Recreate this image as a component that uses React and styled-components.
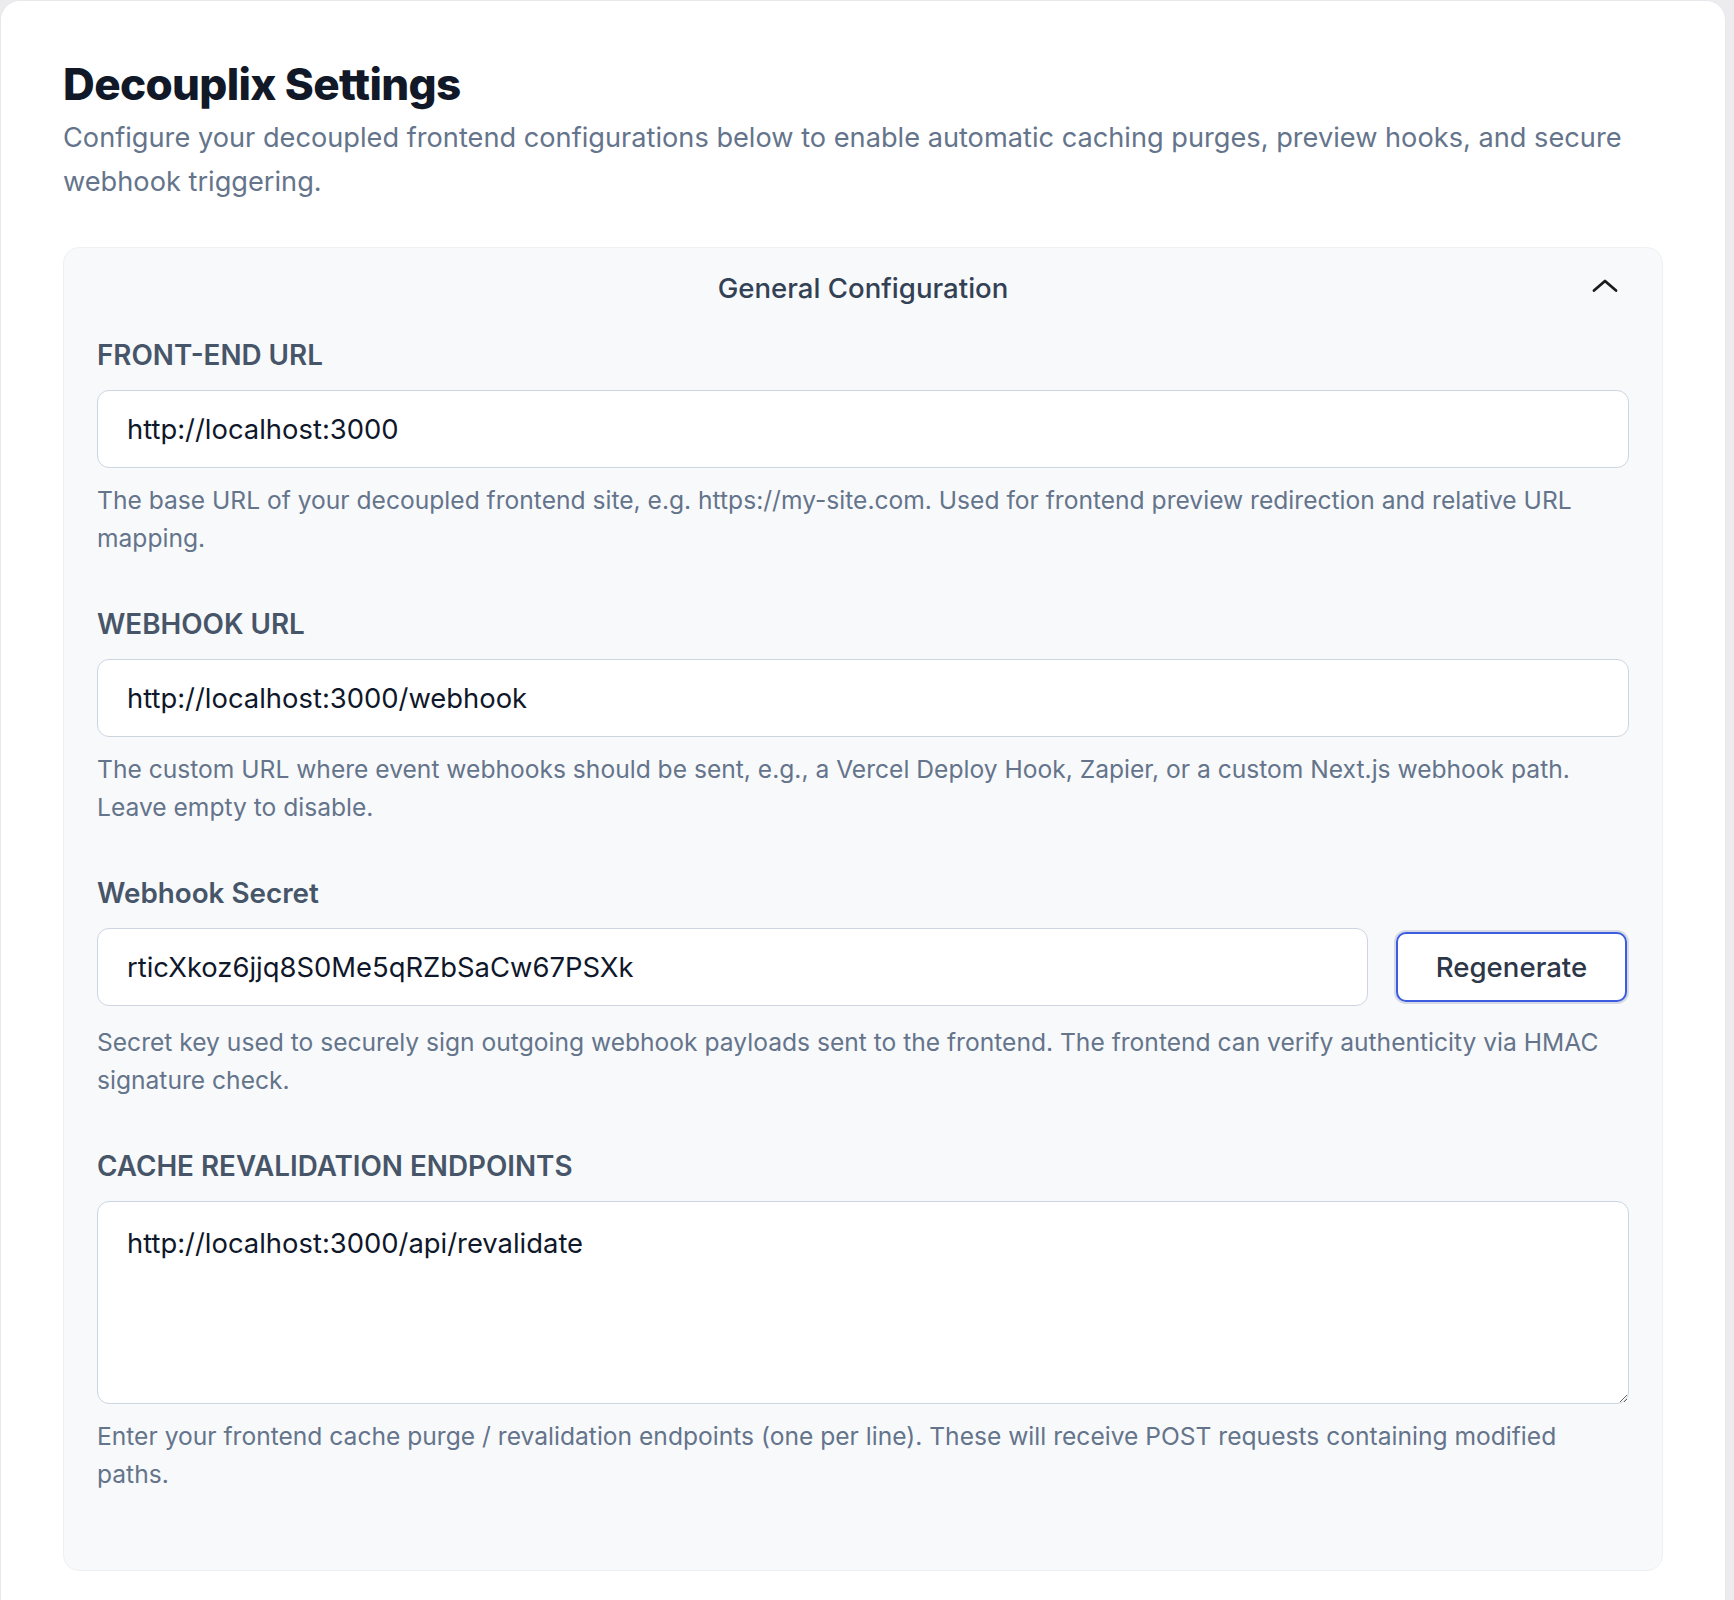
import styled, { createGlobalStyle } from 'styled-components';

const GlobalStyle = createGlobalStyle`
  html, body {
    margin: 0;
    padding: 0;
    background: #ececee;
  }
  * {
    box-sizing: border-box;
  }
`;

const Page = styled.div`
  width: 1726px;
  min-height: 1640px;
  background: #ffffff;
  border: 1px solid #e6e8ec;
  border-radius: 20px;
  padding: 57px 62px 60px;
  font-family: Inter, 'Noto Sans', sans-serif;
`;

const Title = styled.h1`
  margin: 0 0 6px;
  font-size: 44px;
  line-height: 52px;
  font-weight: 800;
  letter-spacing: -0.015em;
  color: #111827;
`;

const Intro = styled.p`
  margin: 0 0 43px;
  font-size: 27.2px;
  line-height: 44px;
  color: #64748b;
`;

const Panel = styled.section`
  background: #f8f9fb;
  border: 1px solid #eef0f4;
  border-radius: 16px;
  padding: 22px 33px 77px;
`;

const PanelHeader = styled.header`
  display: flex;
  align-items: center;
  justify-content: center;
  position: relative;
  height: 36px;
  margin-bottom: 31px;
`;

const PanelTitle = styled.h2`
  margin: 0;
  font-size: 27.6px;
  line-height: 36px;
  font-weight: 500;
  color: #334155;
`;

const Toggle = styled.button`
  position: absolute;
  right: 11px;
  top: 50%;
  transform: translateY(-68%);
  border: 0;
  background: none;
  padding: 0;
  display: flex;
  cursor: pointer;
`;

const Field = styled.div`
  margin-bottom: 49px;
  &:last-child {
    margin-bottom: 0;
  }
`;

const Label = styled.label`
  display: block;
  font-size: 27.8px;
  line-height: 36px;
  font-weight: 600;
  color: #475569;
  text-transform: ${(p) => (p.$upper ? 'uppercase' : 'none')};
  margin-bottom: 17px;
`;

const Input = styled.input`
  display: block;
  flex: 1;
  width: 100%;
  height: 78px;
  padding: 0 29px;
  border: 1.5px solid #cdd5e1;
  border-radius: 12px;
  background: #ffffff;
  font-family: inherit;
  font-size: 27.4px;
  color: #0f172a;
  outline: none;
`;

const TextArea = styled.textarea`
  display: block;
  width: 100%;
  height: 203px;
  padding: 23px 29px;
  border: 1.5px solid #cdd5e1;
  border-radius: 12px;
  background: #ffffff;
  font-family: inherit;
  font-size: 27.4px;
  line-height: 36px;
  color: #0f172a;
  resize: vertical;
  outline: none;
`;

const InputRow = styled.div`
  display: flex;
  align-items: center;
  gap: 28px;
`;

const Button = styled.button`
  flex: none;
  width: 231px;
  height: 70px;
  margin-right: 2px;
  border: 2px solid #3d5de0;
  box-shadow: 0 0 0 2px #d5dae4;
  border-radius: 10px;
  background: #ffffff;
  font-family: inherit;
  font-size: 27.6px;
  font-weight: 500;
  color: #2d3748;
  cursor: pointer;
`;

const Help = styled.p`
  margin: ${(p) => (p.$loose ? '17px' : '13px')} 0 0;
  font-size: 24.6px;
  line-height: 38px;
  color: #64748b;
`;

function ChevronUp() {
  return (
    <svg width="26" height="14" viewBox="0 0 26 14" fill="none">
      <path d="M2 12L13 2.5L24 12" stroke="#1c1c1e" strokeWidth="2.8" strokeLinecap="round" strokeLinejoin="round" />
    </svg>
  );
}

function App() {
  return (
    <>
      <GlobalStyle />
      <Page>
        <Title>Decouplix Settings</Title>
        <Intro>
          Configure your decoupled frontend configurations below to enable automatic caching purges, preview hooks, and
          secure webhook triggering.
        </Intro>

        <Panel>
          <PanelHeader>
            <PanelTitle>General Configuration</PanelTitle>
            <Toggle aria-label="Collapse">
              <ChevronUp />
            </Toggle>
          </PanelHeader>

          <Field>
            <Label $upper>Front-end URL</Label>
            <Input defaultValue="http://localhost:3000" />
            <Help>
              The base URL of your decoupled frontend site, e.g. https://my-site.com. Used for frontend preview
              redirection and relative URL mapping.
            </Help>
          </Field>

          <Field>
            <Label $upper>Webhook URL</Label>
            <Input defaultValue="http://localhost:3000/webhook" />
            <Help>
              The custom URL where event webhooks should be sent, e.g., a Vercel Deploy Hook, Zapier, or a custom
              Next.js webhook path. Leave empty to disable.
            </Help>
          </Field>

          <Field>
            <Label>Webhook Secret</Label>
            <InputRow>
              <Input defaultValue="rticXkoz6jjq8S0Me5qRZbSaCw67PSXk" />
              <Button>Regenerate</Button>
            </InputRow>
            <Help $loose>
              Secret key used to securely sign outgoing webhook payloads sent to the frontend. The frontend can verify
              authenticity via HMAC signature check.
            </Help>
          </Field>

          <Field>
            <Label $upper>Cache Revalidation Endpoints</Label>
            <TextArea defaultValue="http://localhost:3000/api/revalidate" />
            <Help>
              Enter your frontend cache purge / revalidation endpoints (one per line). These will receive POST requests
              containing modified paths.
            </Help>
          </Field>
        </Panel>
      </Page>
    </>
  );
}

export default App;
